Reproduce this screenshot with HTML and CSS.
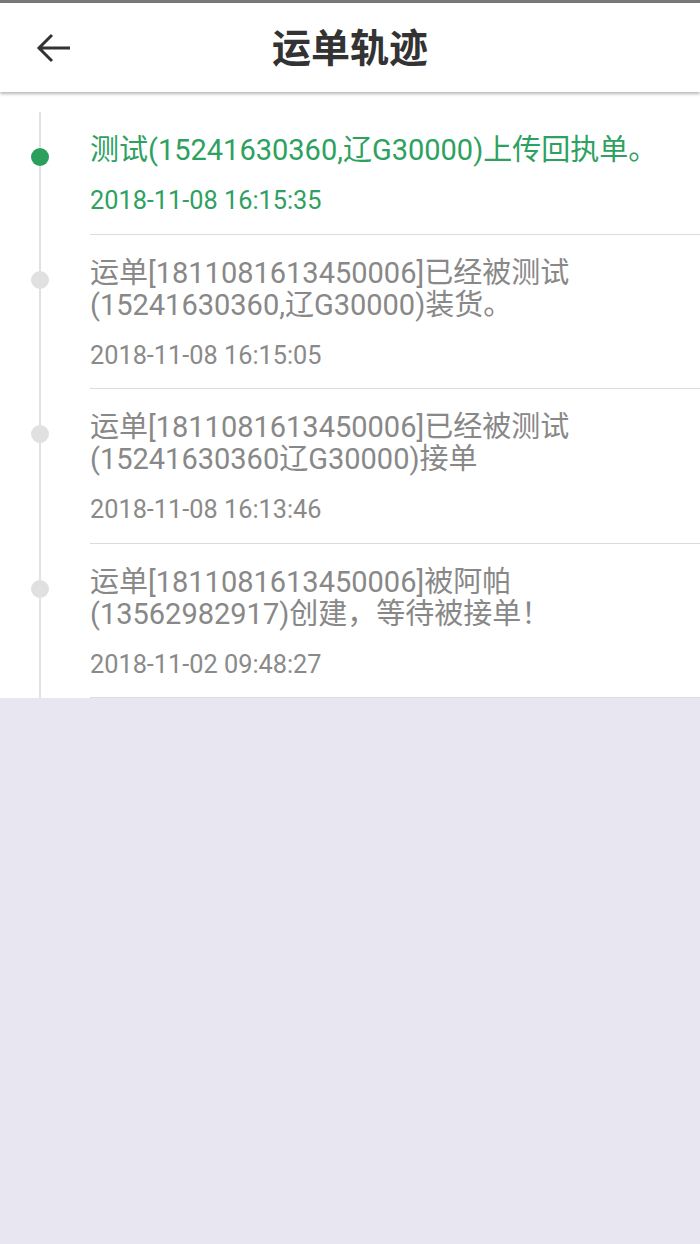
FILE: index.html
```html
<!DOCTYPE html>
<html lang="zh-CN">
<head>
<meta charset="utf-8">
<title>运单轨迹</title>
<link rel="stylesheet" href="styles.css">
</head>
<body>
<div class="topbar"></div>
<header class="header">
  <button class="back" aria-label="返回">
    <svg width="36" height="30" viewBox="0 0 36 30"><path d="M34 15H3M16 2L3 15l13 13" fill="none" stroke="#333" stroke-width="3"/></svg>
  </button>
  <h1 class="title">运单轨迹</h1>
</header>
<main class="timeline">
  <div class="item active">
    <div class="rail"><span class="dot"></span></div>
    <div class="content">
      <p class="msg">测试(15241630360,辽G30000)上传回执单。</p>
      <p class="time">2018-11-08 16:15:35</p>
    </div>
  </div>
  <div class="item">
    <div class="rail"><span class="dot"></span></div>
    <div class="content">
      <p class="msg">运单[1811081613450006]已经被测试(15241630360,辽G30000)装货。</p>
      <p class="time">2018-11-08 16:15:05</p>
    </div>
  </div>
  <div class="item">
    <div class="rail"><span class="dot"></span></div>
    <div class="content">
      <p class="msg">运单[1811081613450006]已经被测试(15241630360辽G30000)接单</p>
      <p class="time">2018-11-08 16:13:46</p>
    </div>
  </div>
  <div class="item">
    <div class="rail"><span class="dot"></span></div>
    <div class="content">
      <p class="msg">运单[1811081613450006]被阿帕(13562982917)创建，等待被接单！</p>
      <p class="time">2018-11-02 09:48:27</p>
    </div>
  </div>
</main>
</body>
</html>
```
FILE: styles.css
```css
* { box-sizing: border-box; }
html, body {
  margin: 0;
  padding: 0;
}
body {
  background: #e8e7f1;
  font-family: Roboto, "Noto Sans CJK SC", sans-serif;
  min-height: 1244px;
}
.topbar {
  height: 3px;
  background: #777;
}
.header {
  position: relative;
  z-index: 1;
  height: 89px;
  background: #fff;
  box-shadow: 0 2px 3px rgba(0,0,0,0.28);
  display: flex;
  align-items: center;
  justify-content: center;
}
.back {
  position: absolute;
  left: 36px;
  top: 30px;
  width: 36px;
  height: 30px;
  padding: 0;
  border: 0;
  background: none;
  display: flex;
}
.title {
  margin: 0 0 4px 0;
  font-family: "Noto Sans CJK SC", sans-serif;
  font-weight: 700;
  font-size: 39px;
  line-height: 1;
  color: #333;
}
.timeline {
  background: #fff;
  padding-top: 20px;
}
.item {
  display: flex;
}
.rail {
  width: 90px;
  flex: none;
  display: flex;
  justify-content: center;
  padding-top: 36px;
  padding-right: 10px;
  background: linear-gradient(#e2e2e2, #e2e2e2) no-repeat 39px 0 / 2px 100%;
}
.dot {
  width: 18px;
  height: 18px;
  border-radius: 50%;
  background: #e0e0e0;
}
.active .dot {
  background: #2aa05c;
}
.content {
  flex: 1;
  padding: 22px 24px 17.5px 0;
  border-bottom: 1px solid #dcdcdc;
}
.msg {
  margin: 0;
  font-size: 29px;
  line-height: 32px;
  color: #888;
}
.time {
  margin: 20px 0 0 0;
  font-size: 25.3px;
  line-height: 30px;
  color: #8a8a8a;
}
.active .msg, .active .time {
  color: #2da160;
}
```
